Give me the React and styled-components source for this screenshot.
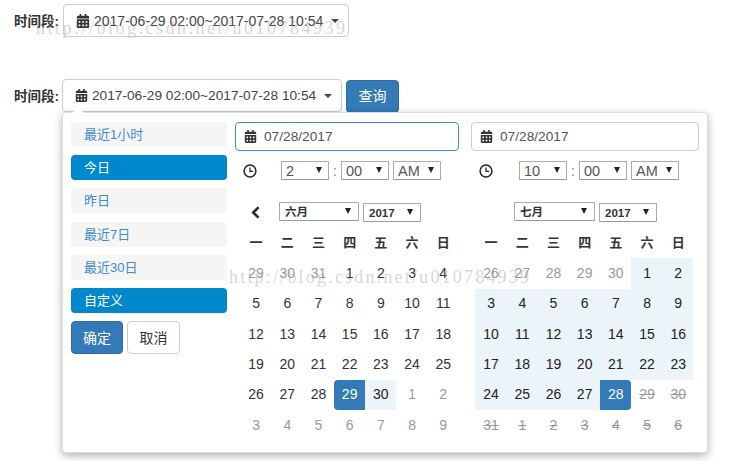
import React from 'react';
import styled, { createGlobalStyle, css } from 'styled-components';
import { FaCalendarAlt, FaChevronLeft } from 'react-icons/fa';

const GlobalStyle = createGlobalStyle`
    html, body {
        margin: 0;
        background: #fff;
    }
    body {
        width: 730px;
        height: 461px;
        overflow: hidden;
        position: relative;
        font-family: "Liberation Sans", "Noto Sans CJK SC", sans-serif;
        font-size: 14px;
        color: #333;
    }
`;

const Page = styled.div`
    display: flex;
    flex-direction: column;
    height: 461px;
    box-sizing: border-box;
    padding: 4px 0 0 14px;
`;

const FilterRow = styled.div`
    display: flex;
    align-items: center;
    height: 33px;
    margin-bottom: ${props => props.$gap || 0}px;
`;

const Label = styled.span`
    font-weight: bold;
    font-size: 13.5px;
    color: #333;
    width: ${props => props.$width}px;
    flex: none;
    padding-bottom: 2px;
    white-space: nowrap;
`;

const RangeButton = styled.div`
    box-sizing: border-box;
    width: ${props => props.$width}px;
    height: 33px;
    display: flex;
    align-items: center;
    padding-left: 12px;
    gap: 4px;
    border: 1px solid #ccc;
    border-radius: 4px;
    background: #fff;
    color: #444;
    font-size: ${props => props.$size}px;
    white-space: nowrap;
`;

const Caret = styled.span`
    width: 0;
    height: 0;
    margin-left: 4px;
    border-top: 4px solid #444;
    border-left: 4px solid transparent;
    border-right: 4px solid transparent;
`;

const QueryButton = styled.div`
    box-sizing: border-box;
    width: 53px;
    height: 33px;
    margin: 1px 0 0 4px;
    padding-bottom: 2px;
    display: flex;
    align-items: center;
    justify-content: center;
    background: #337ab7;
    border: 1px solid #2e6da4;
    border-radius: 4px;
    color: #fff;
`;

const Panel = styled.div`
    box-sizing: border-box;
    position: relative;
    width: 646px;
    height: 341px;
    margin-left: 48px;
    padding: 9px 8px;
    display: flex;
    background: #fff;
    border: 1px solid #ddd;
    border-radius: 4px;
    box-shadow: 0 3px 9px rgba(0, 0, 0, 0.3);

    &::before {
        content: '';
        position: absolute;
        left: 9px;
        top: -6px;
        width: 0;
        height: 0;
        border-bottom: 6px solid #fff;
        border-left: 6px solid transparent;
        border-right: 6px solid transparent;
    }
`;

const Ranges = styled.div`
    width: 156px;
    flex: none;
    margin-right: 8px;
    display: flex;
    flex-direction: column;
`;

const RangeItem = styled.div`
    box-sizing: border-box;
    height: 25px;
    margin-bottom: 8.2px;
    padding: 0 0 2px 13px;
    display: flex;
    align-items: center;
    border-radius: 4px;
    font-size: 13px;
    background: ${props => (props.$active ? '#08c' : '#f5f5f5')};
    color: ${props => (props.$active ? '#fff' : '#428bca')};
`;

const Actions = styled.div`
    display: flex;
    gap: 4px;
`;

const ActionButton = styled.div`
    box-sizing: border-box;
    width: ${props => (props.$primary ? 52 : 53)}px;
    height: 33px;
    padding-bottom: 2px;
    display: flex;
    align-items: center;
    justify-content: center;
    border-radius: 4px;
    border: 1px solid ${props => (props.$primary ? '#2e6da4' : '#ccc')};
    background: ${props => (props.$primary ? '#337ab7' : '#fff')};
    color: ${props => (props.$primary ? '#fff' : '#333')};
`;

const Calendar = styled.div`
    box-sizing: border-box;
    width: ${props => props.$width}px;
    flex: none;
    margin-right: ${props => props.$mr || 0}px;
`;

const DateInput = styled.div`
    box-sizing: border-box;
    height: 29px;
    display: flex;
    align-items: center;
    padding: 0 0 1px 8px;
    gap: 7px;
    border: 1px solid ${props => (props.$focus ? '#428bca' : '#ccc')};
    border-radius: 4px;
    color: #555;
    font-size: 13.7px;
`;

const TimeRow = styled.div`
    display: flex;
    align-items: center;
    height: 19px;
    margin-top: 10px;
    padding-left: 8px;
`;

const ClockIcon = styled.svg`
    width: 14px;
    height: 14px;
    flex: none;
    margin-right: ${props => props.$mr}px;
`;

const Colon = styled.span`
    width: 12px;
    text-align: center;
    color: #777;
`;

const SelectWrap = styled.div`
    position: relative;
    box-sizing: border-box;
    width: ${props => props.$width}px;
    height: 19px;
    margin-left: ${props => props.$ml || 0}px;
    margin-top: ${props => props.$mt || 0}px;
    flex: none;

    &::after {
        content: '';
        position: absolute;
        right: ${props => props.$arrow || 7}px;
        top: 6px;
        border-top: 6px solid #222;
        border-left: 3px solid transparent;
        border-right: 3px solid transparent;
    }
`;

const NativeSelect = styled.select`
    appearance: none;
    box-sizing: border-box;
    display: block;
    width: 100%;
    height: 100%;
    margin: 0;
    padding: 0 0 0 ${props => (props.$bold ? 5 : 4)}px;
    background: #fff;
    border: 1px solid #aaa;
    border-bottom-color: #999;
    border-radius: 1px;
    font-family: inherit;
    font-size: ${props => (props.$bold ? 11.5 : 14.5)}px;
    font-weight: ${props => (props.$bold ? 'bold' : 'normal')};
    color: ${props => (props.$bold ? '#333' : '#555')};
`;

const MonthRow = styled.div`
    display: flex;
    height: 20px;
    margin-top: 22px;
    padding-left: ${props => props.$pad}px;
`;

const PrevButton = styled.div`
    width: 44px;
    padding-left: 14px;
    box-sizing: border-box;
    flex: none;
    display: flex;
    align-items: center;
    color: #222;
    font-size: 13px;

    svg {
        stroke: #222;
        stroke-width: 30px;
    }
`;

const DayGrid = styled.div`
    display: grid;
    grid-template-columns: repeat(7, 31.2px);
    grid-auto-rows: 30.33px;
    margin-top: 6px;
    margin-left: ${props => props.$ml}px;
`;

const WeekDay = styled.div`
    display: flex;
    align-items: center;
    justify-content: center;
    padding: 0 0 3px 1px;
    font-weight: bold;
    font-size: 13px;
    color: #333;
`;

const dayStates = {
    off: css`
        color: #999;
    `,
    range: css`
        background: #ebf4f8;
        color: #222;
    `,
    start: css`
        background: #337ab7;
        color: #fff;
        border-radius: 4px 0 0 4px;
    `,
    end: css`
        background: #337ab7;
        color: #fff;
        border-radius: 0 4px 4px 0;
    `,
    disabled: css`
        color: #999;
        text-decoration: line-through;
    `,
};

const Day = styled.div`
    display: flex;
    align-items: center;
    justify-content: center;
    padding: 0 0 1px 1px;
    color: #333;
    font-size: 14px;
    ${props => dayStates[props.$state]}
`;

const Watermark = styled.span`
    position: absolute;
    left: ${props => props.$x}px;
    top: ${props => props.$y}px;
    font-family: "Liberation Serif", serif;
    font-size: 18px;
    letter-spacing: ${props => props.$spacing}px;
    color: rgba(150, 150, 150, 0.4);
    white-space: nowrap;
    pointer-events: none;
`;

const weekDays = ['一', '二', '三', '四', '五', '六', '日'];
const rangeItems = [
    { text: '最近1小时' },
    { text: '今日', active: true },
    { text: '昨日' },
    { text: '最近7日' },
    { text: '最近30日' },
    { text: '自定义', active: true },
];

const juneDays = [
    [29, 'off'], [30, 'off'], [31, 'off'], [1], [2], [3], [4],
    [5], [6], [7], [8], [9], [10], [11],
    [12], [13], [14], [15], [16], [17], [18],
    [19], [20], [21], [22], [23], [24], [25],
    [26], [27], [28], [29, 'start'], [30, 'range'], [1, 'off'], [2, 'off'],
    [3, 'off'], [4, 'off'], [5, 'off'], [6, 'off'], [7, 'off'], [8, 'off'], [9, 'off'],
];

const julyDays = [
    [26, 'off'], [27, 'off'], [28, 'off'], [29, 'off'], [30, 'off'], [1, 'range'], [2, 'range'],
    [3, 'range'], [4, 'range'], [5, 'range'], [6, 'range'], [7, 'range'], [8, 'range'], [9, 'range'],
    [10, 'range'], [11, 'range'], [12, 'range'], [13, 'range'], [14, 'range'], [15, 'range'], [16, 'range'],
    [17, 'range'], [18, 'range'], [19, 'range'], [20, 'range'], [21, 'range'], [22, 'range'], [23, 'range'],
    [24, 'range'], [25, 'range'], [26, 'range'], [27, 'range'], [28, 'end'], [29, 'disabled'], [30, 'disabled'],
    [31, 'disabled'], [1, 'disabled'], [2, 'disabled'], [3, 'disabled'], [4, 'disabled'], [5, 'disabled'], [6, 'disabled'],
];

const Select = ({ value, width, ml, mt, bold, arrow }) => (
    <SelectWrap $width={width} $ml={ml} $mt={mt} $arrow={arrow}>
        <NativeSelect $bold={bold} defaultValue={value}>
            <option>{value}</option>
        </NativeSelect>
    </SelectWrap>
);

const Clock = ({ mr }) => (
    <ClockIcon $mr={mr} viewBox="0 0 14 14" fill="none" stroke="#222">
        <circle cx="7" cy="7" r="5.9" strokeWidth="1.5" />
        <path d="M7 3.6V7.4H10.2" strokeWidth="1.3" />
    </ClockIcon>
);

const CalendarPane = ({ width, mr, focus, hour, clockGap, month, monthWidth, monthPad, prev, gridMl, days }) => (
    <Calendar $width={width} $mr={mr}>
        <DateInput $focus={focus}>
            <FaCalendarAlt size={13} color="#333" />
            07/28/2017
        </DateInput>
        <TimeRow>
            <Clock mr={clockGap} />
            <Select value={hour} width={48} />
            <Colon>:</Colon>
            <Select value="00" width={48} />
            <Select value="AM" width={48} ml={4} />
        </TimeRow>
        <MonthRow $pad={monthPad}>
            {prev && (
                <PrevButton>
                    <FaChevronLeft />
                </PrevButton>
            )}
            <Select value={month} width={monthWidth} bold arrow={8} />
            <Select value="2017" width={58} ml={4} mt={1} bold arrow={8} />
        </MonthRow>
        <DayGrid $ml={gridMl}>
            {weekDays.map(day => <WeekDay key={day}>{day}</WeekDay>)}
            {days.map(([day, state], index) => (
                <Day key={index} $state={state}>{day}</Day>
            ))}
        </DayGrid>
    </Calendar>
);

const App = () => (
    <>
        <GlobalStyle />
        <Page>
            <FilterRow $gap={42}>
                <Label $width={49}>时间段:</Label>
                <RangeButton $width={286} $size={14}>
                    <FaCalendarAlt size={14} color="#333" />
                    2017-06-29 02:00~2017-07-28 10:54
                    <Caret />
                </RangeButton>
            </FilterRow>
            <FilterRow>
                <Label $width={48}>时间段:</Label>
                <RangeButton $width={280} $size={13.7}>
                    <FaCalendarAlt size={13} color="#333" />
                    2017-06-29 02:00~2017-07-28 10:54
                    <Caret />
                </RangeButton>
                <QueryButton>查询</QueryButton>
            </FilterRow>
            <Panel>
                <Ranges>
                    {rangeItems.map(item => (
                        <RangeItem key={item.text} $active={item.active}>{item.text}</RangeItem>
                    ))}
                    <Actions>
                        <ActionButton $primary>确定</ActionButton>
                        <ActionButton>取消</ActionButton>
                    </Actions>
                </Ranges>
                <CalendarPane
                    width={224}
                    mr={12}
                    focus
                    hour="2"
                    clockGap={24}
                    month="六月"
                    monthWidth={80}
                    monthPad={0}
                    prev
                    gridMl={5}
                    days={juneDays}
                />
                <CalendarPane
                    width={228}
                    hour="10"
                    clockGap={26}
                    month="七月"
                    monthWidth={81}
                    monthPad={43}
                    gridMl={4}
                    days={julyDays}
                />
            </Panel>
        </Page>
        <Watermark $x={36} $y={18} $spacing={2.5}>http://blog.csdn.net/u010784939</Watermark>
        <Watermark $x={229} $y={267} $spacing={2.2}>http://blog.csdn.net/u010784939</Watermark>
    </>
);

export default App;
